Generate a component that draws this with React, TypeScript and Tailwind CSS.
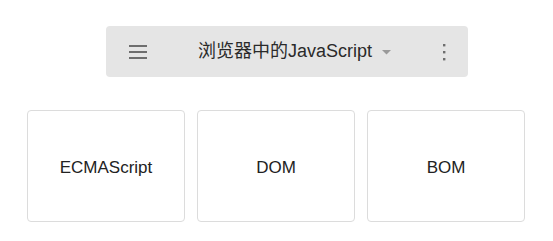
import React from 'react';

const items = ['ECMAScript', 'DOM', 'BOM'];

export default function App() {
  return (
    <div
      className="w-[553px] h-[241px] bg-white overflow-hidden"
      style={{ fontFamily: '"Liberation Sans", "Noto Sans CJK SC", sans-serif' }}
    >
      {/* toolbar */}
      <div className="ml-[106px] mt-[26px] w-[362px] h-[51px] rounded-[4px] bg-[#e5e5e5] flex items-center">
        <div className="w-[24px] h-[24px] ml-[20px] flex items-center justify-center">
          <svg width="24" height="24" viewBox="0 0 24 24" fill="#6e6e6e">
            <rect x="3" y="5" width="18" height="2" />
            <rect x="3" y="11" width="18" height="2" />
            <rect x="3" y="17" width="18" height="2" />
          </svg>
        </div>
        <div className="ml-[48px] flex items-center text-[18px] text-[#2a2a2a]">
          <span>浏览器中的JavaScript</span>
          <svg width="9" height="5" viewBox="0 0 9 5" className="ml-[10px] mt-[2px]" fill="#9a9a9a">
            <path d="M0 0h9L4.5 4.5z" />
          </svg>
        </div>
        <div className="ml-auto mr-[12px] w-[24px] h-[24px] flex items-center justify-center">
          <svg width="24" height="24" viewBox="0 0 24 24" fill="#6e6e6e">
            <rect x="11" y="4" width="2.4" height="2.4" />
            <rect x="11" y="11" width="2.4" height="2.4" />
            <rect x="11" y="18" width="2.4" height="2.4" />
          </svg>
        </div>
      </div>

      {/* cards */}
      <div className="mx-[27px] mt-[33px] flex gap-[12px]">
        {items.map((name) => (
          <div
            key={name}
            className="w-[158px] h-[112px] pt-[3px] rounded-[4px] border border-[#dcdcdc] flex items-center justify-center text-[17px] text-[#222]"
          >
            {name}
          </div>
        ))}
      </div>
    </div>
  );
}
